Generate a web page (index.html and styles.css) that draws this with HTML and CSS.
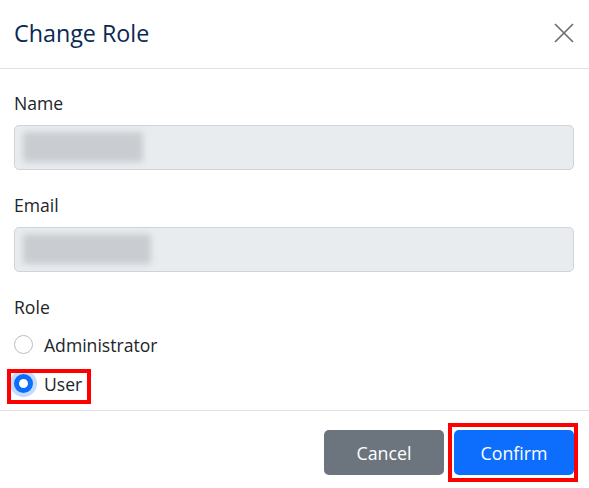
FILE: index.html
```html
<!DOCTYPE html>
<html lang="en">
<head>
  <meta charset="UTF-8" />
  <meta name="viewport" content="width=device-width, initial-scale=1.0" />
  <title>Change Role</title>
  <link rel="stylesheet" href="styles.css">
</head>
<body>
  <div class="modal">
    <header class="modal-header">
      <h5 class="modal-title">Change Role</h5>
      <button class="btn-close" aria-label="Close">
        <svg width="20" height="20" viewBox="0 0 20 20">
          <path d="M1 1 L19 19 M19 1 L1 19" stroke="#6c6f73" stroke-width="1.7" fill="none" />
        </svg>
      </button>
    </header>

    <form class="modal-body">
      <div class="field">
        <label>Name</label>
        <div class="form-control"><span class="blur blur-name"></span></div>
      </div>
      <div class="field">
        <label>Email</label>
        <div class="form-control"><span class="blur blur-email"></span></div>
      </div>
      <div class="field roles">
        <label>Role</label>
        <div class="form-check">
          <input type="radio" name="role" id="roleAdmin" />
          <label for="roleAdmin">Administrator</label>
        </div>
        <div class="form-check highlight">
          <input type="radio" name="role" id="roleUser" checked />
          <label for="roleUser">User</label>
        </div>
      </div>
    </form>

    <footer class="modal-footer">
      <button class="btn btn-secondary">Cancel</button>
      <span class="highlight-btn"><button class="btn btn-primary">Confirm</button></span>
    </footer>
  </div>
</body>
</html>
```

FILE: styles.css
```css
* { box-sizing: border-box; margin: 0; padding: 0; }
body { font-family: 'Open Sans', sans-serif; background: #fff; color: #212529; font-size: 17.6px; line-height: 24px; }
.modal { width: 589px; }
.modal-header { height: 69px; display: flex; align-items: center; justify-content: space-between; padding: 0 15px 3px 14px; border-bottom: 1px solid #dee2e6; }
.modal-title { font-size: 23.3px; line-height: 30px; font-weight: 500; color: #0a2a52; }
.btn-close { background: none; border: none; width: 20px; height: 20px; cursor: pointer; }
.btn-close svg { display: block; }
.modal-body { padding: 22px 15px 7px 14px; }
.field { margin-bottom: 23px; }
.field > label { display: block; margin-bottom: 10px; }
.roles { margin-bottom: 0; }
.roles > label { margin-bottom: 6px; }
.form-check { position: relative; display: flex; align-items: center; gap: 11px; height: 39px; }
.form-check input { appearance: none; width: 19px; height: 19px; border: 1px solid #b9bec3; border-radius: 50%; background: #fff; flex-shrink: 0; }
.form-check input:checked { border: 5.5px solid #0d6efd; box-shadow: 0 0 0 4px rgba(13, 110, 253, 0.25); }
.form-check.highlight::before { content: ""; position: absolute; left: -7px; top: 5px; width: 84px; height: 35px; border: 4px solid #f00; box-sizing: border-box; }
.form-control { height: 45px; background: #e9ecef; border: 1px solid #ced4da; border-radius: 5px; padding: 6px 8px; }
.blur { display: block; height: 30px; background: #c9ccd0; filter: blur(3px); border-radius: 3px; }
.blur-name { width: 120px; }
.blur-email { width: 128px; }
.modal-footer { border-top: 1px solid #dee2e6; display: flex; justify-content: flex-end; align-items: center; gap: 10px; padding: 19px 15px 14px; }
.btn { width: 120px; height: 45px; border: none; border-radius: 5px; color: #fff; font-family: inherit; font-size: 17.8px; cursor: pointer; }
.btn-secondary { background: #6c757d; }
.btn-primary { background: #0d6efd; display: block; }
.highlight-btn { display: block; border: 4px solid #f00; padding: 3px 0 3px 2px; margin: -7px -4px -7px -6px; }
```
